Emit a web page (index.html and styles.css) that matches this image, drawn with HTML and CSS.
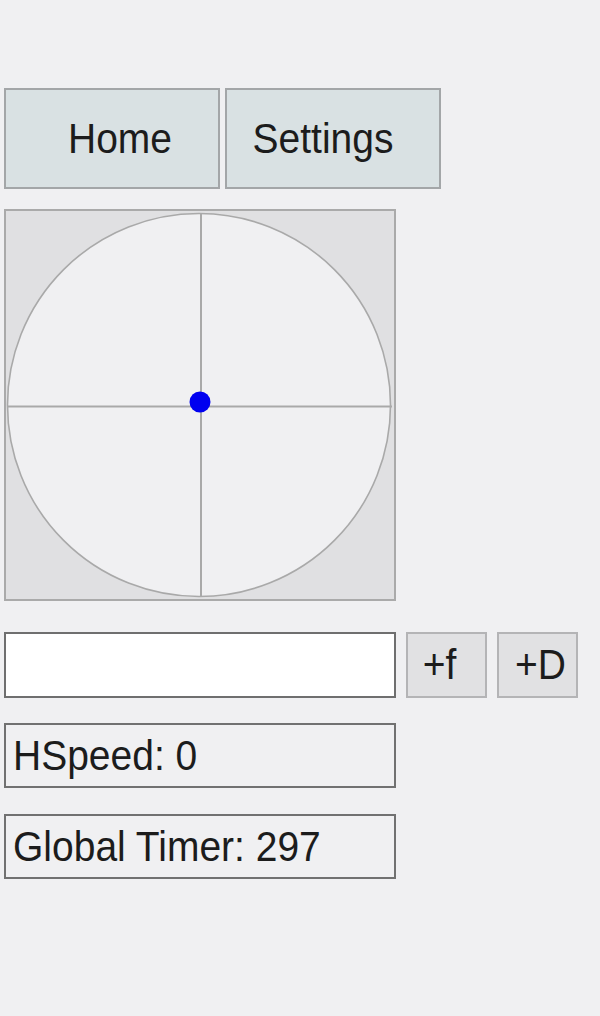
FILE: index.html
```html
<!DOCTYPE html>
<html>
<head>
<meta charset="utf-8">
<link rel="stylesheet" href="styles.css">
</head>
<body>
<div class="app">
  <div class="tabs">
    <div class="tab tab-home"><span class="txt">Home</span></div>
    <div class="tab tab-settings"><span class="txt">Settings</span></div>
  </div>
  <div class="joystick">
    <svg width="388" height="388" viewBox="0 0 388 388">
      <circle cx="193" cy="194" r="191.5" fill="#f0f0f2" stroke="#a9a9a9" stroke-width="1.6"/>
      <line x1="195" y1="2" x2="195" y2="386" stroke="#a9a9a9" stroke-width="2"/>
      <line x1="2" y1="195.5" x2="386" y2="195.5" stroke="#a9a9a9" stroke-width="2"/>
      <circle cx="194" cy="191" r="10.5" fill="#0000f0"/>
    </svg>
  </div>
  <div class="input-row">
    <div class="text-input"></div>
    <div class="small-btn btn-f"><span class="txt">+f</span></div>
    <div class="small-btn btn-d"><span class="txt">+D</span></div>
  </div>
  <div class="readout"><span class="txt">HSpeed: 0</span></div>
  <div class="readout"><span class="txt">Global Timer: 297</span></div>
</div>
</body>
</html>
```

FILE: styles.css
```css
html, body {
  margin: 0;
  padding: 0;
  background: #f0f0f2;
}
body {
  font-family: "Liberation Sans", Arial, sans-serif;
  color: #1c1c1c;
}
.app {
  padding: 88px 0 0 4px;
  display: flex;
  flex-direction: column;
  align-items: flex-start;
}
.txt {
  display: inline-block;
  transform: scaleY(1.08);
}
.tabs {
  display: flex;
  gap: 5px;
}
.tab {
  box-sizing: border-box;
  width: 216px;
  height: 101px;
  background: #d9e1e3;
  border: 2px solid #a3a6a8;
  font-size: 39px;
  display: flex;
  align-items: center;
  justify-content: center;
}
.tab-home {
  padding-left: 16px;
}
.tab-settings {
  padding-right: 20px;
}
.joystick {
  margin-top: 20px;
  width: 388px;
  height: 388px;
  border: 2px solid #aaaaaa;
  background: #e0e0e2;
}
.joystick svg {
  display: block;
}
.input-row {
  margin-top: 31px;
  display: flex;
  gap: 10px;
}
.text-input {
  box-sizing: border-box;
  width: 392px;
  height: 66px;
  background: #ffffff;
  border: 2px solid #6f6f6f;
}
.small-btn {
  box-sizing: border-box;
  width: 81px;
  height: 66px;
  background: #e1e1e3;
  border: 2px solid #b4b4b6;
  font-size: 39px;
  display: flex;
  align-items: center;
  justify-content: center;
}
.btn-f {
  padding-right: 14px;
}
.btn-d {
  padding-left: 6px;
}
.readout {
  box-sizing: border-box;
  width: 392px;
  height: 65px;
  border: 2px solid #717171;
  font-size: 39px;
  padding-left: 7px;
  display: flex;
  align-items: center;
}
.input-row + .readout {
  margin-top: 25px;
}
.readout + .readout {
  margin-top: 26px;
}
```
